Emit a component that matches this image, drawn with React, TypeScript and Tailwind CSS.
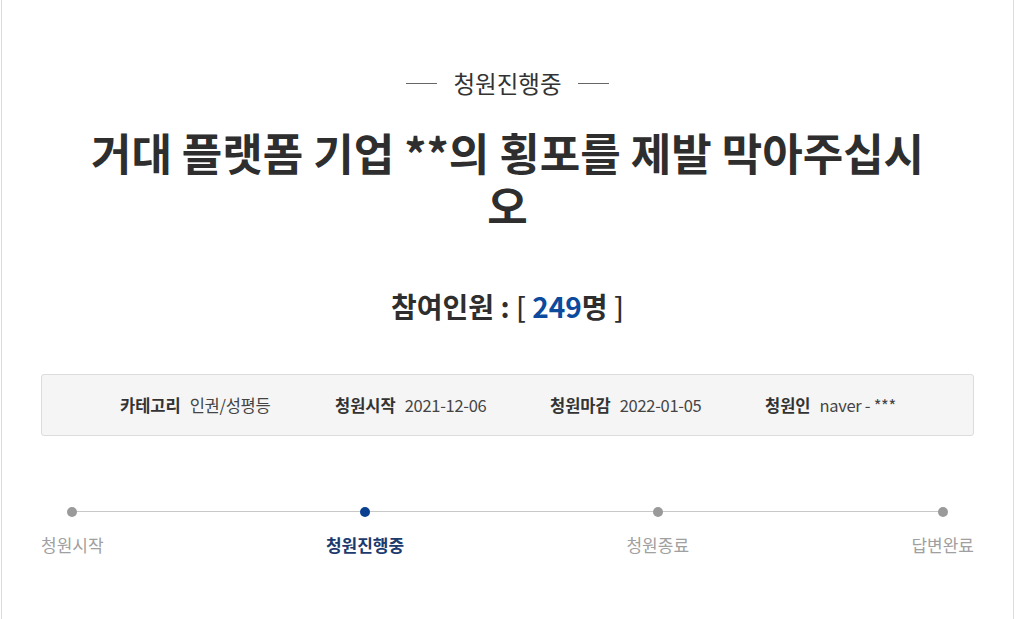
const font = { fontFamily: '"Noto Sans CJK KR", "Noto Sans", sans-serif' };

const info = [
  { label: "카테고리", value: "인권/성평등" },
  { label: "청원시작", value: "2021-12-06" },
  { label: "청원마감", value: "2022-01-05" },
  { label: "청원인", value: "naver - ***" },
];

const steps = [
  { label: "청원시작", active: false },
  { label: "청원진행중", active: true },
  { label: "청원종료", active: false },
  { label: "답변완료", active: false },
];

export default function App() {
  return (
    <div className="w-[1015px] h-[619px] bg-white overflow-hidden" style={font}>
      <div className="ml-[1px] w-[1013px] h-full border-x border-[#dcdcdc] px-[39px] pt-[67px]">
        {/* status */}
        <div className="flex items-center justify-center gap-[16px]">
          <span className="w-[31px] h-px bg-[#666]" />
          <span className="text-[23.5px] leading-[32px] text-[#333]">청원진행중</span>
          <span className="w-[31px] h-px bg-[#666]" />
        </div>

        {/* title */}
        <h1 className="mt-[27px] px-[40px] text-center text-[44px] leading-[53px] font-bold text-[#2e2e2e]">
          거대 플랫폼 기업 **의 횡포를 제발 막아주십시오
        </h1>

        {/* participants */}
        <div className="mt-[54px] text-center text-[28px] leading-[40px] font-bold text-[#2e2e2e]">
          참여인원 : <span className="font-medium">[</span>{" "}
          <span className="text-[#0b4a9c]">249</span>명{" "}
          <span className="font-medium">]</span>
        </div>

        {/* info box */}
        <div className="mt-[48px] h-[62px] flex items-center pl-[78px] bg-[#f5f5f5] border border-[#dcdcdc] rounded-[3px]">
          {info.map((it) => (
            <div key={it.label} className="w-[215px] shrink-0 flex items-center gap-[9px]">
              <span className="text-[16.5px] font-bold text-[#333]">{it.label}</span>
              <span className="text-[16.5px] text-[#444] tracking-[-0.3px]">{it.value}</span>
            </div>
          ))}
        </div>

        {/* progress */}
        <div className="relative mt-[71px]">
          <div className="absolute left-[31px] right-[31px] top-[4px] h-px bg-[#c8c8c8]" />
          <div className="relative flex justify-between">
            {steps.map((s) => (
              <div key={s.label} className="flex flex-col items-center gap-[16px]">
                <span
                  className={
                    s.active
                      ? "w-[10px] h-[10px] rounded-full bg-[#0b3f8f]"
                      : "w-[10px] h-[10px] rounded-full bg-[#9a9a9a]"
                  }
                />
                <span
                  className={
                    s.active
                      ? "text-[17px] leading-[24px] font-bold text-[#1b3a6e]"
                      : "text-[17px] leading-[24px] text-[#a0a0a0]"
                  }
                >
                  {s.label}
                </span>
              </div>
            ))}
          </div>
        </div>
      </div>
    </div>
  );
}
